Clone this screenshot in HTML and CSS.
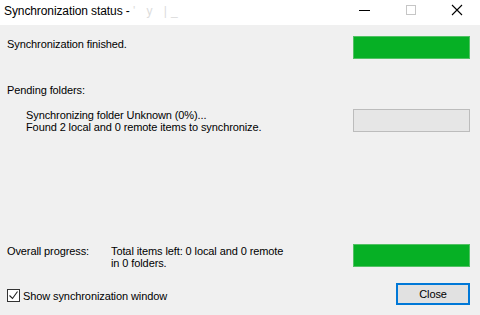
FILE: index.html
```html
<!DOCTYPE html>
<html lang="en">
<head>
<meta charset="UTF-8">
<title>Synchronization status</title>
<link rel="stylesheet" href="styles.css">
</head>
<body>
<div class="window">
    <div class="titlebar">
        <span class="title">Synchronization status - <span class="blurred">' y |_</span></span>
        <div class="controls">
            <span class="ctl min"><svg width="12" height="12" viewBox="0 0 12 12"><path d="M0 6.5h11" stroke="#000" stroke-width="1"/></svg></span>
            <span class="ctl max"><svg width="12" height="12" viewBox="0 0 12 12"><rect x="1.5" y="1.5" width="9" height="9" fill="none" stroke="#c6c6c6"/></svg></span>
            <span class="ctl close"><svg width="12" height="12" viewBox="0 0 12 12"><path d="M1 1l10 10M11 1L1 11" stroke="#000" stroke-width="1.1"/></svg></span>
        </div>
    </div>
    <div class="client">
        <div class="row status-row">
            <span class="status-text">Synchronization finished.</span>
            <div class="bar done"></div>
        </div>
        <div class="pending-label">Pending folders:</div>
        <div class="row folder-row">
            <div class="folder-text">
                <div>Synchronizing folder Unknown (0%)...</div>
                <div>Found 2 local and 0 remote items to synchronize.</div>
            </div>
            <div class="bar empty"></div>
        </div>
        <div class="spacer"></div>
        <div class="row overall-row">
            <span class="overall-label">Overall progress:</span>
            <div class="overall-text">
                <div>Total items left: 0 local and 0 remote</div>
                <div>in 0 folders.</div>
            </div>
            <div class="bar done"></div>
        </div>
        <div class="row footer">
            <label class="check">
                <span class="box"><svg width="11" height="11" viewBox="0 0 11 11"><path d="M1.5 5.5l3 3 5-7" fill="none" stroke="#222" stroke-width="1.1"/></svg></span>
                <span class="check-text">Show synchronization window</span>
            </label>
            <button class="btn">Close</button>
        </div>
    </div>
</div>
</body>
</html>
```

FILE: styles.css
```css
* {
    box-sizing: border-box;
}
body {
    margin: 0;
    font-family: "Liberation Sans", Arial, sans-serif;
    font-size: 11px;
    letter-spacing: -0.1px;
    line-height: 12px;
    color: #000;
}
.window {
    width: 480px;
    height: 315px;
    display: flex;
    flex-direction: column;
}
.titlebar {
    height: 25px;
    background: #fff;
    display: flex;
    align-items: flex-start;
    justify-content: space-between;
}
.title {
    padding: 5px 0 0 4px;
    font-size: 12px;
}
.blurred {
    color: #dcdcdc;
    letter-spacing: 4px;
}
.controls {
    display: flex;
}
.ctl {
    width: 46px;
    padding-top: 4px;
    display: flex;
    justify-content: center;
}
.client {
    flex: 1;
    background: #f0f0f0;
    padding: 11px 10px 0 7px;
    display: flex;
    flex-direction: column;
}
.row {
    display: flex;
    align-items: flex-start;
    justify-content: space-between;
}
.status-text {
    padding-top: 2px;
}
.bar {
    width: 117px;
    height: 23px;
    border: 1px solid #bcbcbc;
    background: #e6e6e6;
    flex-shrink: 0;
}
.bar.done {
    background: #06b025;
    border-color: #52c164;
}
.pending-label {
    margin-top: 25px;
}
.folder-row {
    margin-top: 13px;
    padding-left: 19px;
}
.spacer {
    flex: 1;
}
.overall-row {
    justify-content: flex-start;
}
.overall-label {
    width: 104px;
    padding-top: 1px;
}
.overall-text {
    flex: 1;
    padding-top: 1px;
}
.footer {
    margin-top: 14px;
    margin-bottom: 10px;
}
.check {
    display: flex;
    align-items: flex-start;
    gap: 3px;
}
.box {
    width: 13px;
    height: 13px;
    margin-top: 6px;
    border: 1px solid #333;
    background: #fff;
    display: flex;
}
.check-text {
    padding-top: 7px;
}
.btn {
    width: 74px;
    height: 22px;
    border: 2px solid #0078d7;
    background: #e1e1e1;
    font-family: inherit;
    font-size: 11px;
    letter-spacing: -0.1px;
    color: #000;
    padding: 0;
}
```
